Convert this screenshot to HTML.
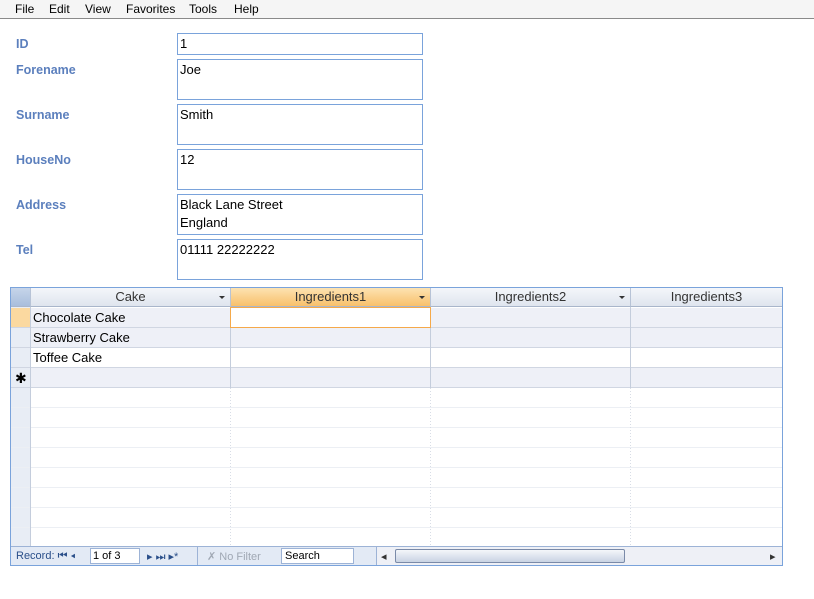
<!DOCTYPE html><html><head><style>
body{margin:0;width:814px;height:599px;background:#fff;font-family:"Liberation Sans",sans-serif;position:relative;overflow:hidden;font-size:13px}
.menu{position:absolute;left:0;top:0;width:814px;height:18px;background:#f5f5f5;border-bottom:1px solid #8a8a8a}
.menu span{position:absolute;top:2px;font-size:12px;color:#000}
.lbl{position:absolute;left:16px;color:#5b7fbd;font-weight:bold;font-size:12.5px}
.box{position:absolute;left:177px;width:246px;border:1px solid #7aa3db;font-size:13px;padding:1px 0 0 2px;box-sizing:border-box;line-height:18px}
.g{position:absolute;left:10px;top:287px;width:773px;height:279px;border:1px solid #7aa3db;box-sizing:border-box;background:#fff;overflow:hidden}
.abs{position:absolute}
.hd{top:0;height:19px;background:linear-gradient(#f4f6fa,#dfe5ee);border-right:1px solid #b7c3d6;border-bottom:1px solid #a9b6cb;text-align:center;line-height:18px;color:#333;box-sizing:border-box}
.arr{position:absolute;right:5px;top:8px;border:3px solid transparent;border-top:3px solid #333}
</style></head><body>
<div class="menu"><span style="left:15px">File</span><span style="left:49px">Edit</span><span style="left:85px">View</span><span style="left:126px">Favorites</span><span style="left:189px">Tools</span><span style="left:234px">Help</span></div>
<div class="lbl" style="top:37px">ID</div><div class="box" style="top:33px;height:22px">1</div>
<div class="lbl" style="top:63px">Forename</div><div class="box" style="top:59px;height:41px">Joe</div>
<div class="lbl" style="top:108px">Surname</div><div class="box" style="top:104px;height:41px">Smith</div>
<div class="lbl" style="top:153px">HouseNo</div><div class="box" style="top:149px;height:41px">12</div>
<div class="lbl" style="top:198px">Address</div><div class="box" style="top:194px;height:41px">Black Lane Street<br>England</div>
<div class="lbl" style="top:243px">Tel</div><div class="box" style="top:239px;height:41px">01111 22222222</div>
<div class="g">
<svg class="abs" style="left:0;top:0" width="771" height="259">
<rect x="0" y="19" width="19" height="240" fill="#e8edf5"/>
<rect x="0" y="20" width="19" height="19" fill="#fbd9a0"/>
<rect x="19" y="20" width="752" height="40" fill="#eef0f7"/>
<rect x="19" y="80" width="752" height="20" fill="#eef0f7"/>
<g stroke="#d0d6e2">
<line x1="0" y1="39.5" x2="771" y2="39.5"/><line x1="0" y1="59.5" x2="771" y2="59.5"/><line x1="0" y1="79.5" x2="771" y2="79.5"/><line x1="0" y1="99.5" x2="771" y2="99.5"/>
</g>
<g stroke="#eceff4">
<line x1="0" y1="119.5" x2="771" y2="119.5"/><line x1="0" y1="139.5" x2="771" y2="139.5"/><line x1="0" y1="159.5" x2="771" y2="159.5"/><line x1="0" y1="179.5" x2="771" y2="179.5"/><line x1="0" y1="199.5" x2="771" y2="199.5"/><line x1="0" y1="219.5" x2="771" y2="219.5"/><line x1="0" y1="239.5" x2="771" y2="239.5"/>
</g>
<g stroke="#c4cddc"><line x1="19.5" y1="19" x2="19.5" y2="259"/><line x1="219.5" y1="19" x2="219.5" y2="100"/><line x1="419.5" y1="19" x2="419.5" y2="100"/><line x1="619.5" y1="19" x2="619.5" y2="100"/></g>
<g stroke="#d8dde6" stroke-dasharray="1 2"><line x1="219.5" y1="100" x2="219.5" y2="259"/><line x1="419.5" y1="100" x2="419.5" y2="259"/><line x1="619.5" y1="100" x2="619.5" y2="259"/></g>
<rect x="219.5" y="19.5" width="200" height="20" fill="#fff" stroke="#f5a94a"/>
<text x="4" y="95" font-size="14" font-family="Liberation Sans">✱</text>
</svg>
<div class="abs hd" style="left:0;width:20px;background:linear-gradient(#c6d5ea,#a9bedc)"></div>
<div class="abs hd" style="left:20px;width:200px">Cake<span class="arr"></span></div>
<div class="abs hd" style="left:220px;width:200px;background:linear-gradient(#fde3b2,#f8c06b)">Ingredients1<span class="arr"></span></div>
<div class="abs hd" style="left:420px;width:200px">Ingredients2<span class="arr"></span></div>
<div class="abs hd" style="left:620px;width:151px;border-right:0">Ingredients3</div>
<div class="abs" style="left:22px;top:22px">Chocolate Cake</div>
<div class="abs" style="left:22px;top:42px">Strawberry Cake</div>
<div class="abs" style="left:22px;top:62px">Toffee Cake</div>
<div class="abs" style="left:0;top:258px;width:771px;height:19px;background:#e3eaf5;border-top:1px solid #9db3d6;font-size:11px;color:#2a4f8a;box-sizing:border-box">
<span class="abs" style="left:5px;top:3px">Record: ⏮ ◂</span>
<span class="abs" style="left:79px;top:1px;width:46px;height:14px;border:1px solid #9db3d6;background:#fff;color:#000;padding-left:2px;line-height:14px">1 of 3</span>
<span class="abs" style="left:136px;top:3px">▸ ⏭ ▸*</span>
<span class="abs" style="left:186px;top:0;height:18px;border-left:1px solid #9db3d6"></span>
<span class="abs" style="left:196px;top:3px;color:#a0a8b4">✗ No Filter</span>
<span class="abs" style="left:270px;top:1px;width:68px;height:14px;border:1px solid #9db3d6;background:#fff;color:#000;padding-left:3px;line-height:14px">Search</span>
<span class="abs" style="left:365px;top:0;width:406px;height:18px;background:#eef0f6;border-left:1px solid #9db3d6"></span>
<span class="abs" style="left:370px;top:3px;color:#333">◂</span>
<span class="abs" style="left:384px;top:2px;width:228px;height:12px;border:1px solid #7a8aa8;border-radius:2px;background:linear-gradient(#f4f6fa,#c9d3e3)"></span>
<span class="abs" style="left:759px;top:3px;color:#333">▸</span>
</div>
</div>
</body></html>
